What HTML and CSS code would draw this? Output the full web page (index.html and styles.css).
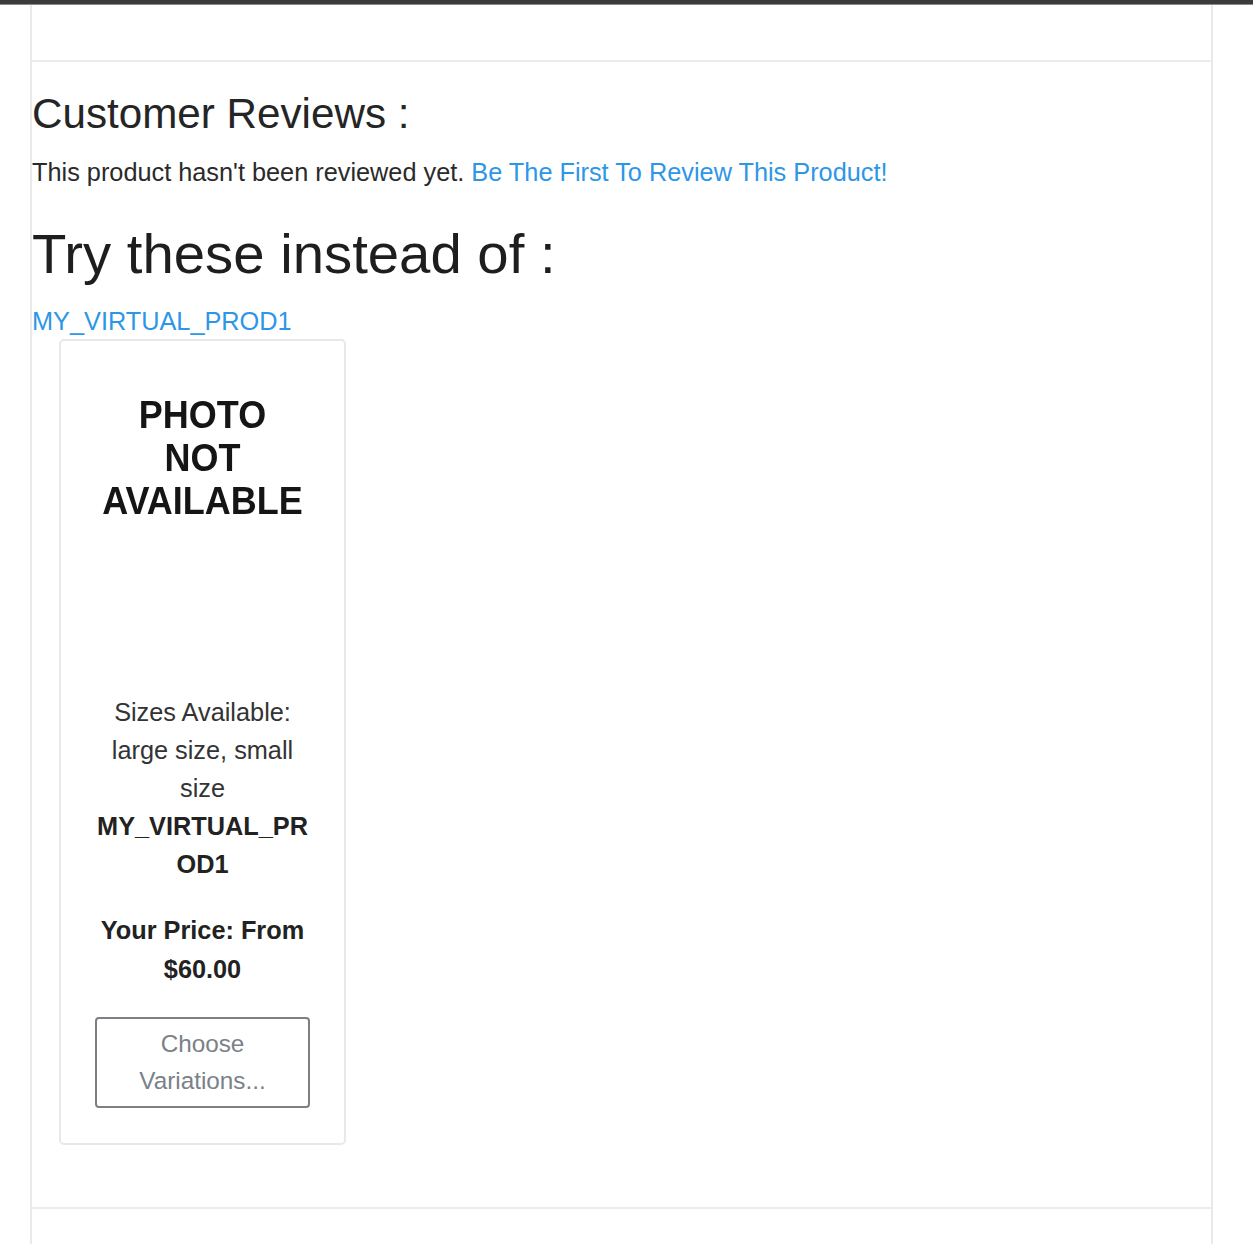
FILE: index.html
```html
<!DOCTYPE html>
<html lang="en">
<head>
<meta charset="utf-8">
<title>Product</title>
<link rel="stylesheet" href="styles.css">
</head>
<body>
<div class="topbar"></div>
<div class="container">
  <div class="top-space"></div>
  <div class="rule"></div>
  <section class="reviews">
    <h2 class="reviews-title">Customer Reviews :</h2>
    <p class="reviews-text">This product hasn't been reviewed yet. <a href="#" class="link">Be The First To Review This Product!</a></p>
    <h2 class="related-title">Try these instead of :</h2>
    <a href="#" class="link related-link">MY_VIRTUAL_PROD1</a>
    <div class="card">
      <div class="photo">
        <div class="photo-text">PHOTO<br>NOT<br>AVAILABLE</div>
      </div>
      <div class="card-body">
        <div class="sizes">Sizes Available: large size, small size</div>
        <div class="name">MY_VIRTUAL_PROD1</div>
        <div class="price">Your Price: From $60.00</div>
        <button class="btn" type="button">Choose Variations...</button>
      </div>
    </div>
  </section>
  <div class="rule bottom-rule"></div>
  <div class="bottom-space"></div>
</div>
</body>
</html>
```

FILE: styles.css
```css
html, body {
  margin: 0;
  padding: 0;
  background: #fff;
}
body {
  font-family: "Liberation Sans", Arial, Helvetica, sans-serif;
  color: #333;
  font-size: 25.3px;
  line-height: 1.5;
}
.topbar {
  height: 4px;
  background: #3b3b3b;
  border-bottom: 1px solid #8a8a8a;
}
.container {
  box-sizing: border-box;
  margin-left: 30px;
  width: 1183px;
  border-left: 2px solid #e9e9e9;
  border-right: 2px solid #e9e9e9;
}
.top-space {
  height: 55px;
}
.rule {
  height: 2px;
  background: #ececec;
}
.reviews {
  padding-top: 27px;
}
.reviews-title {
  margin: 0;
  font-size: 42.2px;
  font-weight: 400;
  line-height: 1.2;
  color: #252525;
}
.reviews-text {
  margin: 14px 0 0;
  font-size: 25.3px;
  line-height: 1.5;
  color: #2a2a2a;
}
.link {
  color: #2d96e7;
  text-decoration: none;
}
.related-title {
  margin: 28px 0 0;
  font-size: 56.3px;
  font-weight: 400;
  line-height: 1.2;
  color: #1e1e1e;
}
.related-link {
  display: block;
  margin-top: 16px;
  line-height: 36px;
}
.card {
  box-sizing: border-box;
  width: 287px;
  margin: 0 0 0 27px;
  border: 2px solid #e8e8e8;
  border-radius: 5px;
  padding: 0 34px 35px;
  text-align: center;
}
.photo {
  height: 352px;
  box-sizing: border-box;
  padding-top: 57px;
}
.photo-text {
  font-weight: 700;
  font-size: 36px;
  line-height: 40px;
  color: #151515;
  transform: scaleY(1.08);
  filter: blur(0.6px);
}
.card-body {
  color: #333;
}
.sizes {
  line-height: 38px;
}
.name {
  font-weight: 700;
  color: #222;
  line-height: 38px;
  word-break: break-all;
}
.price {
  margin-top: 28px;
  font-weight: 700;
  color: #222;
  line-height: 38.5px;
}
.btn {
  display: block;
  box-sizing: border-box;
  width: 100%;
  margin-top: 29px;
  padding: 6px 12px 7px;
  font-family: "Liberation Sans", Arial, Helvetica, sans-serif;
  font-size: 24.3px;
  line-height: 37px;
  color: #7b8189;
  background: #fff;
  border: 2px solid #7c7f84;
  border-radius: 4px;
}
.bottom-rule {
  margin-top: 62px;
}
.bottom-space {
  height: 40px;
}
```
